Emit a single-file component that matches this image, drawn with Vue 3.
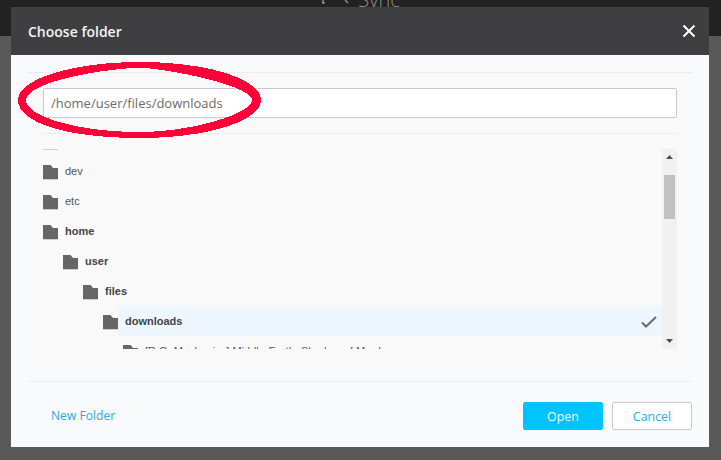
<script setup>
const rows = [
  { name: '', depth: 0 },
  { name: 'dev', depth: 0 },
  { name: 'etc', depth: 0 },
  { name: 'home', depth: 0, open: true },
  { name: 'user', depth: 1, open: true },
  { name: 'files', depth: 2, open: true },
  { name: 'downloads', depth: 3, open: true, selected: true },
  { name: '[R.G. Mechanics] Middle-Earth: Shadow of Mordor', depth: 4 }
]
</script>

<template>
  <div class="page">
    <div class="topbar">
      <svg class="top-icon" width="34" height="14" viewBox="0 0 34 14">
        <path d="M2 0v3M1 3h3M24 0l3 3v0" fill="none" stroke="#8a8a8a" stroke-width="1.6" />
      </svg>
      <span class="sync">Sync</span>
    </div>
    <div class="backdrop"></div>

    <div class="modal">
      <header class="head">
        <span class="title">Choose folder</span>
        <svg class="close" width="14" height="14" viewBox="0 0 14 14">
          <path d="M1.5 1.5l11 11M12.5 1.5l-11 11" stroke="#fff" stroke-width="2" fill="none" />
        </svg>
      </header>

      <div class="body">
        <div class="panel">
          <div class="path-wrap">
            <input class="path" value="/home/user/files/downloads" readonly />
          </div>
          <div class="tree">
            <div class="rows">
              <div v-for="r in rows" :key="r.name" class="row" :class="{ open: r.open }" :style="{ paddingLeft: r.depth * 20 + 'px' }">
                <svg class="folder" width="15" height="15" viewBox="0 0 15 15">
                  <path d="M0 0h7.5l2.5 3H15v11H0z" fill="#666" />
                  <path d="M0 14.5h15" stroke="#cfcfcf" stroke-width="1" />
                </svg>
                <div class="label" :class="{ selected: r.selected }">
                  <span>{{ r.name }}</span>
                  <svg v-if="r.selected" class="check" width="16" height="12" viewBox="0 0 16 12">
                    <path d="M1 6.5l4 4L15 1" fill="none" stroke="#6a6d70" stroke-width="2" />
                  </svg>
                </div>
              </div>
            </div>
            <div class="scrollbar">
              <svg class="arrow" width="15" height="15" viewBox="0 0 15 15"><path d="M4 10l3.5-4 3.5 4z" fill="#505050" /></svg>
              <div class="thumb"></div>
              <svg class="arrow down" width="15" height="15" viewBox="0 0 15 15"><path d="M4 5l3.5 4L11 5z" fill="#505050" /></svg>
            </div>
          </div>
        </div>
        <footer class="foot">
          <a class="new">New Folder</a>
          <div class="buttons">
            <button class="btn primary">Open</button>
            <button class="btn">Cancel</button>
          </div>
        </footer>
      </div>
    </div>

    <svg class="ring" width="721" height="460" viewBox="0 0 721 460">
      <path
        fill="#ff0039"
        fill-rule="evenodd"
        shape-rendering="crispEdges"
        d="M18 100C18 79 73 62 140 62C208 62 261 79 261 100C261 121 208 138 140 138C68 138 18 123 18 100Z
           M26 100C26 116 76 132 140 132C190 132 252 114 252 100C252 88 190 72 140 67.5C90 70 26 84 26 100Z"
      />
    </svg>
  </div>
</template>

<style>
html, body { margin: 0; padding: 0; background: #595959; }
</style>

<style scoped>
.page {
  position: relative;
  width: 721px;
  height: 460px;
  overflow: hidden;
  background: #595959;
  font-family: "Open Sans", sans-serif;
}
.topbar {
  height: 36px;
  background: #222;
  display: flex;
  justify-content: center;
  align-items: flex-start;
  gap: 3px;
}
.sync {
  color: #8d8d8d;
  font-size: 20px;
  line-height: 14px;
  margin-top: -7px;
  font-weight: 300;
}
.backdrop { height: 424px; }
.modal {
  position: absolute;
  left: 11px;
  top: 7px;
  width: 698px;
  height: 440px;
  background: #f9fafc;
  display: flex;
  flex-direction: column;
}
.head {
  height: 48px;
  flex: none;
  background: #3f3f41;
  display: flex;
  align-items: center;
  justify-content: space-between;
  padding: 0 13px 0 17px;
}
.title {
  color: #f4f4f4;
  font-size: 14px;
  font-weight: 600;
}
.body {
  flex: 1;
  padding: 17px 17px 0;
  display: flex;
  flex-direction: column;
}
.panel {
  height: 291px;
  flex: none;
  box-sizing: border-box;
  background: #f9f9f9;
  border-top: 1px solid #ececec;
  padding: 15px 15px 0;
}
.path-wrap {
  padding-bottom: 15px;
  border-bottom: 1px solid #ececec;
}
.path {
  display: block;
  box-sizing: border-box;
  width: 100%;
  height: 30px;
  padding: 0 7px;
  border: 1px solid #c8c8c8;
  border-radius: 2px;
  background: #fff;
  color: #6b6b6b;
  font-family: "Open Sans", sans-serif;
  font-size: 13px;
  outline: none;
}
.tree {
  margin-top: 15px;
  height: 200px;
  display: flex;
  overflow: hidden;
}
.rows {
  flex: 1;
  min-width: 0;
  margin-top: -23px;
}
.row {
  height: 30px;
  display: flex;
  align-items: center;
  font-family: "Liberation Sans", sans-serif;
  font-size: 11px;
  color: #555;
}
.row.open { font-weight: 700; color: #444; }
.folder { flex: none; margin-top: 3px; }
.label {
  flex: 1;
  min-width: 0;
  height: 30px;
  display: flex;
  align-items: center;
  justify-content: space-between;
  padding: 0 5px 0 7px;
  white-space: nowrap;
}
.label.selected { background: #eef6fe; }
.check { flex: none; margin-top: 2px; }
.scrollbar {
  flex: none;
  width: 15px;
  background: #f1f1f1;
  display: flex;
  flex-direction: column;
  align-items: center;
}
.arrow { flex: none; }
.arrow.down { margin-top: auto; }
.thumb {
  width: 11px;
  height: 44px;
  margin-top: 11px;
  background: #c1c1c1;
}
.foot {
  margin-top: 18px;
  border-top: 1px solid #ececec;
  display: flex;
  justify-content: space-between;
  padding: 20px 0 0 23px;
}
.new {
  color: #2fa9d6;
  font-size: 12.1px;
  line-height: 28px;
}
.buttons { display: flex; gap: 9px; }
.btn {
  width: 80px;
  height: 28px;
  box-sizing: border-box;
  padding: 0;
  border: 1px solid #c8c8c8;
  border-radius: 2px;
  background: #fff;
  color: #2fa9d6;
  font-family: "Open Sans", sans-serif;
  font-size: 12.4px;
}
.btn.primary {
  border-color: #00c3ff;
  background: #00c3ff;
  color: #f2fbff;
}
.ring {
  position: absolute;
  left: 0;
  top: 0;
  pointer-events: none;
}
</style>
